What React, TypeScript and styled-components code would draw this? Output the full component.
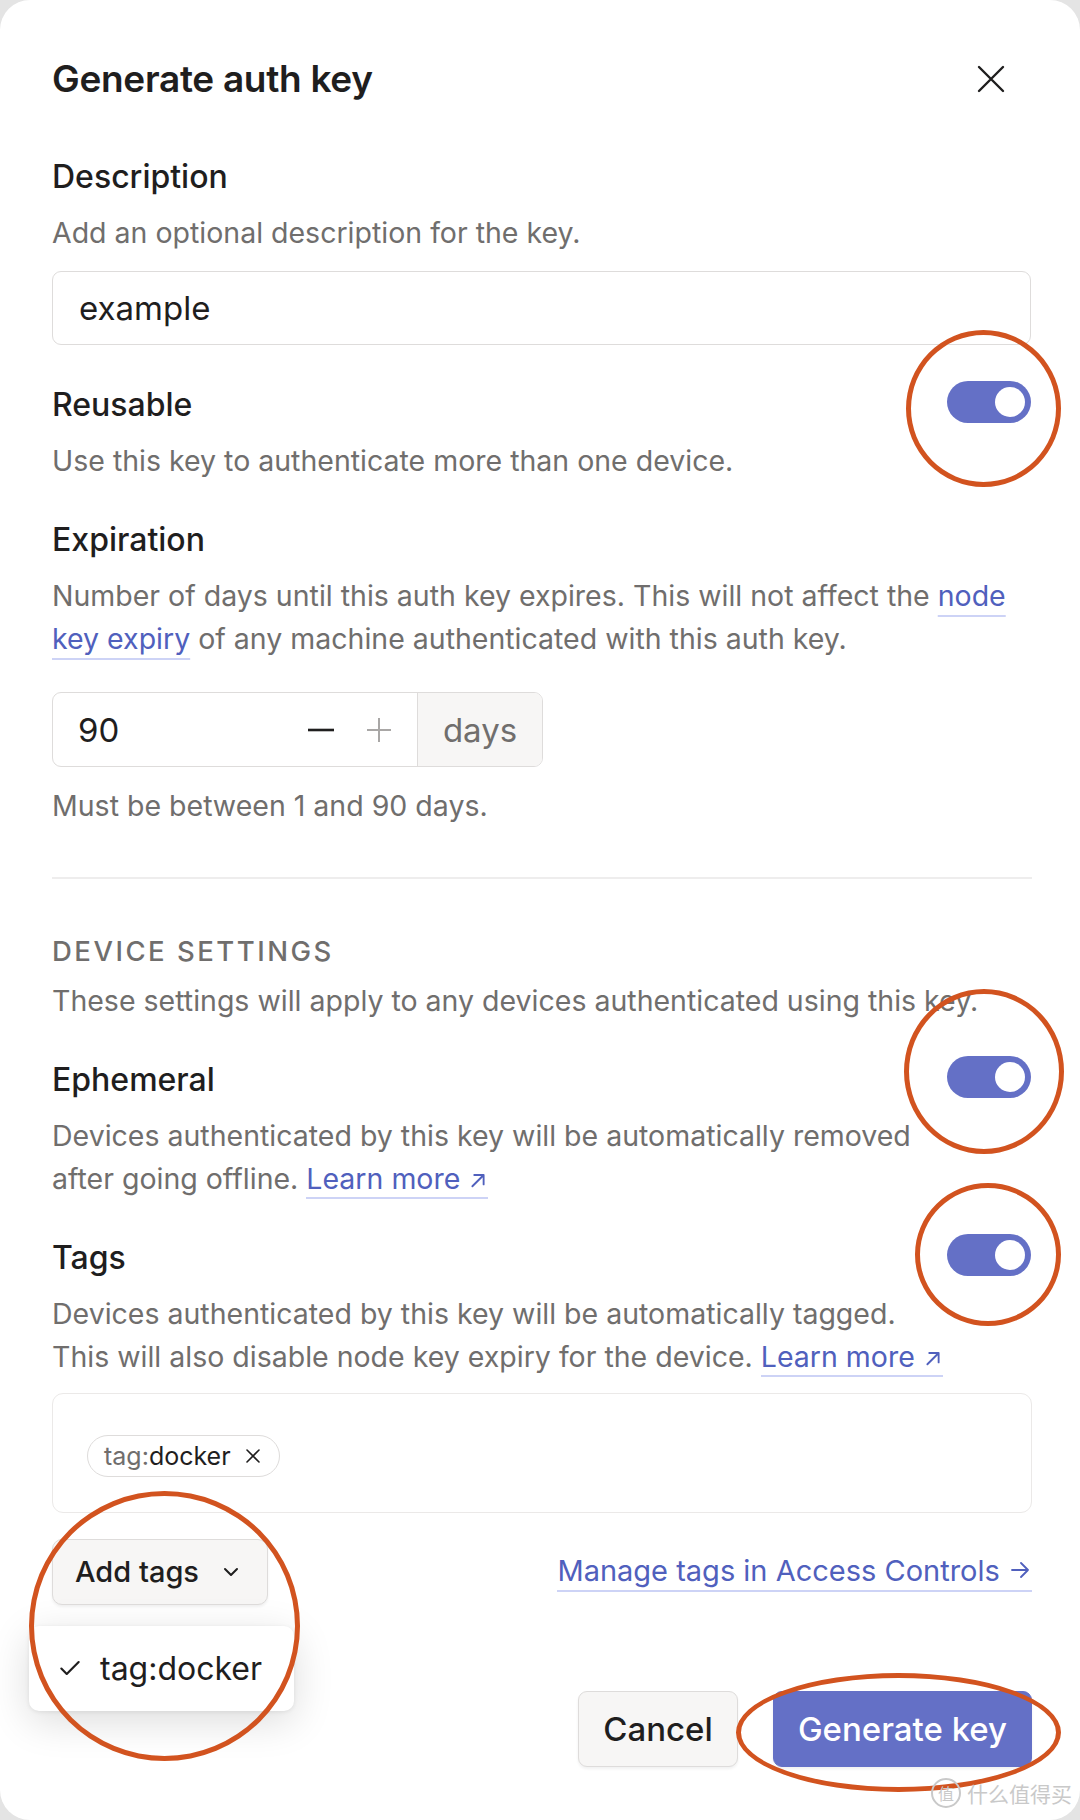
import { createGlobalStyle } from "styled-components";
import styled from "styled-components";

const GlobalStyle = createGlobalStyle`
  html, body {
    margin: 0;
    padding: 0;
    background: #e4e4e4;
  }
  body {
    font-family: Inter, "Noto Sans", sans-serif;
    color: #1f1e1e;
  }
`;

const ink = "#1f1e1e";
const muted = "#706e6d";
const link = "#5060bd";
const accent = "#6470c6";
const line = "#dedcdb";
const soft = "#f7f6f5";

const CheckIcon = () => (
  <svg width="26" height="26" viewBox="0 0 24 24" fill="none" stroke={ink} strokeWidth="2" strokeLinecap="round" strokeLinejoin="round">
    <path d="M4 12.5l5 5L20 6.5" />
  </svg>
);

const ArrowUpRight = () => (
  <LinkIcon width="20" height="20" viewBox="0 0 16 16" fill="none" stroke="currentColor" strokeWidth="1.5" strokeLinecap="round" strokeLinejoin="round">
    <path d="M3.5 13L12.5 4M5 4h7.5v7.5" />
  </LinkIcon>
);

const ArrowRight = () => (
  <LinkIcon width="24" height="24" viewBox="0 0 24 24" fill="none" stroke="currentColor" strokeWidth="1.8" strokeLinecap="round" strokeLinejoin="round">
    <path d="M4 12h16M13 5l7 7-7 7" />
  </LinkIcon>
);

const App = () => {
  return (
    <>
      <GlobalStyle />
      <Card>
        <Header>
          <Title>Generate auth key</Title>
          <CloseButton aria-label="Close">
            <svg width="28" height="28" viewBox="0 0 28 28" fill="none" stroke={ink} strokeWidth="2.4" strokeLinecap="round">
              <path d="M2 2l24 24M26 2L2 26" />
            </svg>
          </CloseButton>
        </Header>

        <Field $top={58}>
          <Label>Description</Label>
          <Help>Add an optional description for the key.</Help>
          <TextInput>example</TextInput>
        </Field>

        <ToggleRow $top={40}>
          <FieldText>
            <Label>Reusable</Label>
            <Help>Use this key to authenticate more than one device.</Help>
          </FieldText>
          <Toggle $on />
        </ToggleRow>

        <Field $top={38}>
          <Label>Expiration</Label>
          <Help>
            Number of days until this auth key expires. This will not affect the <TextLink>node key expiry</TextLink> of
            any machine authenticated with this auth key.
          </Help>
          <NumberInput>
            <NumberValue>90</NumberValue>
            <Stepper>
              <svg width="26" height="4" viewBox="0 0 26 4"><rect width="26" height="2.6" y="0.7" fill={ink} /></svg>
            </Stepper>
            <Stepper $dim>
              <svg width="26" height="26" viewBox="0 0 26 26" stroke="#a9a7a6" strokeWidth="2"><path d="M13 1v24M1 13h24" /></svg>
            </Stepper>
            <Suffix>days</Suffix>
          </NumberInput>
          <Hint>Must be between 1 and 90 days.</Hint>
        </Field>

        <Divider />

        <SectionTitle>Device settings</SectionTitle>
        <SectionHelp>These settings will apply to any devices authenticated using this key.</SectionHelp>

        <ToggleRow $top={38}>
          <FieldText>
            <Label>Ephemeral</Label>
            <Help>
              Devices authenticated by this key will be automatically removed after going offline.{" "}
              <ArrowLink>
                Learn more <ArrowUpRight />
              </ArrowLink>
            </Help>
          </FieldText>
          <Toggle $on />
        </ToggleRow>

        <ToggleRow $top={38}>
          <FieldText>
            <Label>Tags</Label>
            <Help>
              Devices authenticated by this key will be automatically tagged. This will also disable node key expiry for
              the device.{" "}
              <ArrowLink>
                Learn more <ArrowUpRight />
              </ArrowLink>
            </Help>
          </FieldText>
          <Toggle $on />
        </ToggleRow>

        <TagBox>
          <Chip>
            <ChipPrefix>tag:</ChipPrefix>docker
            <svg width="16" height="16" viewBox="0 0 16 16" stroke={ink} strokeWidth="1.6" strokeLinecap="round">
              <path d="M2 2l12 12M14 2L2 14" />
            </svg>
          </Chip>
        </TagBox>

        <TagActions>
          <MenuAnchor>
            <AddTagsButton>
              Add tags
              <svg width="20" height="20" viewBox="0 0 20 20" fill="none" stroke={ink} strokeWidth="2" strokeLinecap="round" strokeLinejoin="round">
                <path d="M4 7l6 6 6-6" />
              </svg>
            </AddTagsButton>
            <Menu>
              <MenuItem>
                <CheckIcon />
                tag:docker
              </MenuItem>
            </Menu>
          </MenuAnchor>
          <ArrowLink $big>
            Manage tags in Access Controls <ArrowRight />
          </ArrowLink>
        </TagActions>

        <Footer>
          <Button>Cancel</Button>
          <Button $primary>Generate key</Button>
        </Footer>

        <Mark style={{ left: 906, top: 330, width: 155, height: 157 }} />
        <Mark style={{ left: 904, top: 989, width: 160, height: 165 }} />
        <Mark style={{ left: 915, top: 1183, width: 146, height: 143 }} />
        <Mark style={{ left: 29, top: 1491, width: 271, height: 270 }} />
        <Mark style={{ left: 736, top: 1673, width: 325, height: 119 }} />

        <Watermark>
          <WatermarkLogo>值</WatermarkLogo>
          什么值得买
        </Watermark>
      </Card>
    </>
  );
};

export default App;

const Card = styled.div`
  position: relative;
  box-sizing: border-box;
  width: 1080px;
  height: 1820px;
  background: #fff;
  border-radius: 30px;
  padding: 59px 49px 0 52px;
  display: flex;
  flex-direction: column;
  overflow: hidden;
`;

const Header = styled.div`
  display: flex;
  justify-content: space-between;
  align-items: center;
  height: 40px;
`;

const Title = styled.h1`
  margin: 0;
  font-size: 37px;
  font-weight: 600;
  letter-spacing: -0.3px;
  line-height: 40px;
`;

const CloseButton = styled.button`
  border: none;
  background: none;
  padding: 0;
  margin-right: 26px;
  display: flex;
`;

const Field = styled.div<{ $top: number }>`
  display: flex;
  flex-direction: column;
  margin-top: ${({ $top }) => $top}px;
`;

const ToggleRow = styled.div<{ $top: number }>`
  display: flex;
  align-items: flex-start;
  margin-top: ${({ $top }) => $top}px;
`;

const FieldText = styled.div`
  flex: 1;
  display: flex;
  flex-direction: column;
`;

const Label = styled.div`
  font-size: 32px;
  font-weight: 500;
  line-height: 40px;
  margin-bottom: 14px;
`;

const Help = styled.div`
  font-size: 28.5px;
  line-height: 43px;
  color: ${muted};
`;

const TextLink = styled.a`
  color: ${link};
  text-decoration: underline;
  text-decoration-color: #cdd3f6;
  text-decoration-thickness: 2px;
  text-underline-offset: 9px;
`;

const ArrowLink = styled.a<{ $big?: boolean }>`
  display: inline-block;
  color: ${link};
  text-decoration: none;
  border-bottom: 2px solid #cdd3f6;
  line-height: ${({ $big }) => ($big ? "38px" : "36px")};
  font-size: ${({ $big }) => ($big ? "29px" : "inherit")};
  white-space: nowrap;
`;

const LinkIcon = styled.svg`
  display: inline-block;
  vertical-align: -1px;
`;

const TextInput = styled.div`
  margin-top: 17px;
  height: 74px;
  box-sizing: border-box;
  border: 1.5px solid ${line};
  border-radius: 9px;
  display: flex;
  align-items: center;
  padding-left: 26px;
  font-size: 33px;
`;

const Toggle = styled.div<{ $on?: boolean }>`
  position: relative;
  flex: none;
  width: 84px;
  height: 42px;
  margin-top: -4px;
  border-radius: 21px;
  background: ${({ $on }) => ($on ? accent : "#ccc")};

  &::after {
    content: "";
    position: absolute;
    top: 6px;
    right: ${({ $on }) => ($on ? "6px" : "48px")};
    width: 30px;
    height: 30px;
    border-radius: 50%;
    background: #fff;
  }
`;

const NumberInput = styled.div`
  margin-top: 32px;
  width: 491px;
  height: 75px;
  box-sizing: border-box;
  border: 1.5px solid ${line};
  border-radius: 9px;
  display: flex;
  align-items: stretch;
  overflow: hidden;
`;

const NumberValue = styled.div`
  flex: 1;
  display: flex;
  align-items: center;
  padding-left: 25px;
  font-size: 33px;
`;

const Stepper = styled.div<{ $dim?: boolean }>`
  width: 50px;
  display: flex;
  align-items: center;
  justify-content: center;
  margin-right: ${({ $dim }) => ($dim ? "13px" : "8px")};
`;

const Suffix = styled.div`
  width: 124px;
  background: ${soft};
  border-left: 1.5px solid ${line};
  display: flex;
  align-items: center;
  justify-content: center;
  font-size: 33px;
  color: ${muted};
`;

const Hint = styled(Help)`
  margin-top: 17px;
`;

const Divider = styled.hr`
  border: none;
  height: 1.5px;
  background: #eeeded;
  margin: 50px 0 0;
  width: 980px;
`;

const SectionTitle = styled.div`
  margin-top: 52px;
  font-size: 27.5px;
  line-height: 40px;
  font-weight: 500;
  text-transform: uppercase;
  letter-spacing: 2.5px;
  color: ${muted};
`;

const SectionHelp = styled(Help)`
  margin-top: 8px;
`;

const TagBox = styled.div`
  margin-top: 15px;
  width: 980px;
  height: 120px;
  box-sizing: border-box;
  border: 1.5px solid #ebe9e8;
  border-radius: 11px;
  padding: 41px 0 0 34px;
`;

const Chip = styled.span`
  display: inline-flex;
  align-items: center;
  height: 42px;
  box-sizing: border-box;
  padding: 0 18px 0 16px;
  border: 1.5px solid ${line};
  border-radius: 21px;
  font-size: 25px;
  color: ${ink};

  svg {
    margin-left: 14px;
  }
`;

const ChipPrefix = styled.span`
  color: ${muted};
`;

const TagActions = styled.div`
  margin-top: 26px;
  width: 980px;
  display: flex;
  justify-content: space-between;
  align-items: center;
`;

const MenuAnchor = styled.div`
  position: relative;
`;

const AddTagsButton = styled.button`
  width: 216px;
  height: 66px;
  box-sizing: border-box;
  display: flex;
  align-items: center;
  gap: 22px;
  padding: 0 0 0 22px;
  background: ${soft};
  border: 1.5px solid ${line};
  border-radius: 10px;
  box-shadow: 0 2px 3px rgba(0, 0, 0, 0.06);
  font-family: inherit;
  font-size: 29px;
  font-weight: 500;
  color: ${ink};
`;

const Menu = styled.div`
  position: absolute;
  top: 87px;
  left: -23px;
  width: 265px;
  height: 85px;
  background: #fff;
  border-radius: 10px;
  box-shadow: 0 10px 40px rgba(0, 0, 0, 0.14), 0 1px 4px rgba(0, 0, 0, 0.08);
  display: flex;
  align-items: center;
  z-index: 2;
`;

const MenuItem = styled.div`
  display: flex;
  align-items: center;
  gap: 17px;
  padding-left: 28px;
  font-size: 32px;
  color: ${ink};
`;

const Footer = styled.div`
  margin-top: 86px;
  width: 980px;
  display: flex;
  justify-content: flex-end;
  gap: 35px;
`;

const Button = styled.button<{ $primary?: boolean }>`
  height: 76px;
  box-sizing: border-box;
  padding: 0;
  width: ${({ $primary }) => ($primary ? "259px" : "160px")};
  border-radius: 9px;
  border: 1.5px solid ${({ $primary }) => ($primary ? accent : line)};
  background: ${({ $primary }) => ($primary ? accent : soft)};
  color: ${({ $primary }) => ($primary ? "#fff" : ink)};
  font-family: inherit;
  font-size: 33px;
  font-weight: 500;
  box-shadow: 0 2px 3px rgba(0, 0, 0, 0.06);
`;

const Mark = styled.div`
  position: absolute;
  box-sizing: border-box;
  border: 5px solid #d2531f;
  border-radius: 50%;
  pointer-events: none;
  z-index: 3;
`;

const Watermark = styled.div`
  position: absolute;
  right: 8px;
  bottom: 12px;
  display: flex;
  align-items: center;
  gap: 6px;
  font-family: "Noto Sans CJK SC", sans-serif;
  font-size: 21px;
  color: #c9c9c9;
  z-index: 4;
`;

const WatermarkLogo = styled.span`
  width: 26px;
  height: 26px;
  border: 2px solid #c9c9c9;
  border-radius: 50%;
  display: flex;
  align-items: center;
  justify-content: center;
  font-size: 16px;
`;
